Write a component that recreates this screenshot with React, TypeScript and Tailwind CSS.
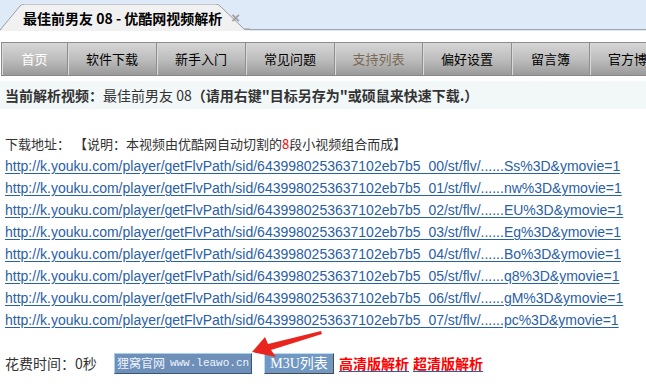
import React from "react";

const cjk = "font-['Microsoft_YaHei','Noto_Sans_CJK_SC',sans-serif]";

const navItems = [
  { t: "首页", w: "w-[66px]", c: "text-white" },
  { t: "软件下载", w: "w-[89px]", c: "text-black" },
  { t: "新手入门", w: "w-[89px]", c: "text-black" },
  { t: "常见问题", w: "w-[89px]", c: "text-black" },
  { t: "支持列表", w: "w-[88px]", c: "text-[#7a6a55]" },
  { t: "偏好设置", w: "w-[89px]", c: "text-black" },
  { t: "留言簿", w: "w-[78px]", c: "text-black" },
  { t: "官方博客", w: "w-[89px]", c: "text-black" },
];

const suffixes = ["Ss", "nw", "EU", "Eg", "Bo", "q8", "gM", "pc"];

export default function App() {
  return (
    <div className={`w-[646px] h-[392px] bg-white overflow-hidden relative ${cjk}`}>
      {/* browser tab bar */}
      <div className="h-[31px] bg-[#dfeaf8] relative flex items-end">
        <div className="absolute left-0 right-0 bottom-[1px] h-px bg-[#a0a6ae]" />
        <div className="relative w-[250px] h-[27px] flex items-center pl-[23px]">
          <svg className="absolute inset-0" width="250" height="27" viewBox="0 0 250 27">
            <path d="M0 27 L20 2 Q22 0 25 0 L215 0 Q218 0 220 2 L245 26 L250 26 L250 27 Z" fill="#f1f1f1" />
            <path d="M0 26 L20 2 Q22 0 25 0 L215 0 Q218 0 220 2 L244 25 L250 25" fill="none" stroke="#9aa0a8" strokeWidth="1" />
          </svg>
          <span className="relative text-[14px] font-bold text-black leading-none whitespace-nowrap">最佳前男友 08 - 优酷网视频解析</span>
          <span className="relative ml-[9px] text-[15px] font-bold text-[#a0a0a0] leading-none font-['Liberation_Sans',sans-serif]">×</span>
        </div>
      </div>

      <div className="h-[11px]" />

      {/* nav */}
      <div className="ml-[1px] flex h-[34px] border-t border-l border-[#8c8c8c] bg-gradient-to-b from-[#d6d6d6] via-[#bebebe] to-[#9a9a9a] border-b border-b-[#888]">
        {navItems.map((n, i) => (
          <div
            key={i}
            className={`${n.w} shrink-0 flex items-center justify-center text-[13px] ${n.c} border-r border-[#8e8e8e] shadow-[inset_1px_0_0_#dadada]`}
          >
            {n.t}
          </div>
        ))}
      </div>

      <div className="h-[5px]" />

      {/* heading */}
      <div className="h-[28px] bg-[#f2f7f8] flex items-center pl-[5px] text-[14px] text-[#333] whitespace-nowrap">
        <span className="font-bold">当前解析视频：</span>
        <span>最佳前男友 08</span>
        <span className="font-bold">（请用右键"目标另存为"或硕鼠来快速下载.）</span>
      </div>

      <div className="mt-[24px] pl-[5px] h-[22px] flex items-center text-[13px] text-[#333] whitespace-nowrap">
        下载地址：<span className="ml-[4px]">【说明：本视频由优酷网自动切割的</span><span className="text-[#ff0000]">8</span>段小视频组合而成】
      </div>

      <div className="pl-[5px] flex flex-col font-['Liberation_Sans',Arial,sans-serif] text-[14px]">
        {suffixes.map((s, i) => (
          <a
            key={i}
            href="#"
            className="h-[22px] leading-[22px] text-[#2a60a4] underline underline-offset-[2px] whitespace-nowrap self-start"
          >
            {`http://k.youku.com/player/getFlvPath/sid/6439980253637102eb7b5_0${i}/st/flv/......${s}%3D&ymovie=1`}
          </a>
        ))}
      </div>

      {/* bottom row */}
      <div className="mt-[21px] pl-[5px] h-[22px] flex items-center whitespace-nowrap">
        <span className="text-[14px] text-[#333] w-[109px]">花费时间：0秒</span>
        <div className="h-[21px] w-[138px] flex items-center justify-center bg-[#6e90b8] border border-t-[#a6d2f0] border-l-[#a6d2f0] border-b-[#3a5577] border-r-[#3a5577] text-[#eef4ff]">
          <span className="text-[12px]">狸窝官网</span>
          <span className="ml-[5px] text-[11px] font-['Liberation_Mono',monospace]">www.leawo.cn</span>
        </div>
        <div className="ml-[12px] h-[21px] w-[70px] flex items-center justify-center bg-[#7198c2] border border-t-[#b8dcf4] border-l-[#b8dcf4] border-b-[#4a4a4a] border-r-[#4a4a4a] text-white text-[14px] font-['Liberation_Serif','Noto_Sans_CJK_SC',serif]">
          M3U列表
        </div>
        <a href="#" className="ml-[5px] text-[14px] font-bold text-[#ff0000] underline decoration-[#2a60a4] underline-offset-[2px]">高清版解析</a>
        <a href="#" className="ml-[4px] text-[14px] font-bold text-[#ff0000] underline decoration-[#2a60a4] underline-offset-[2px]">超清版解析</a>
      </div>

      {/* red arrow */}
      <svg className="absolute left-[248px] top-[328px]" width="80" height="30" viewBox="0 0 80 30">
        <path d="M4 24 L17 9 L20 16 L73 3 L74 6 L23 22 L28 29 Z" fill="#e8261f" />
      </svg>
    </div>
  );
}
